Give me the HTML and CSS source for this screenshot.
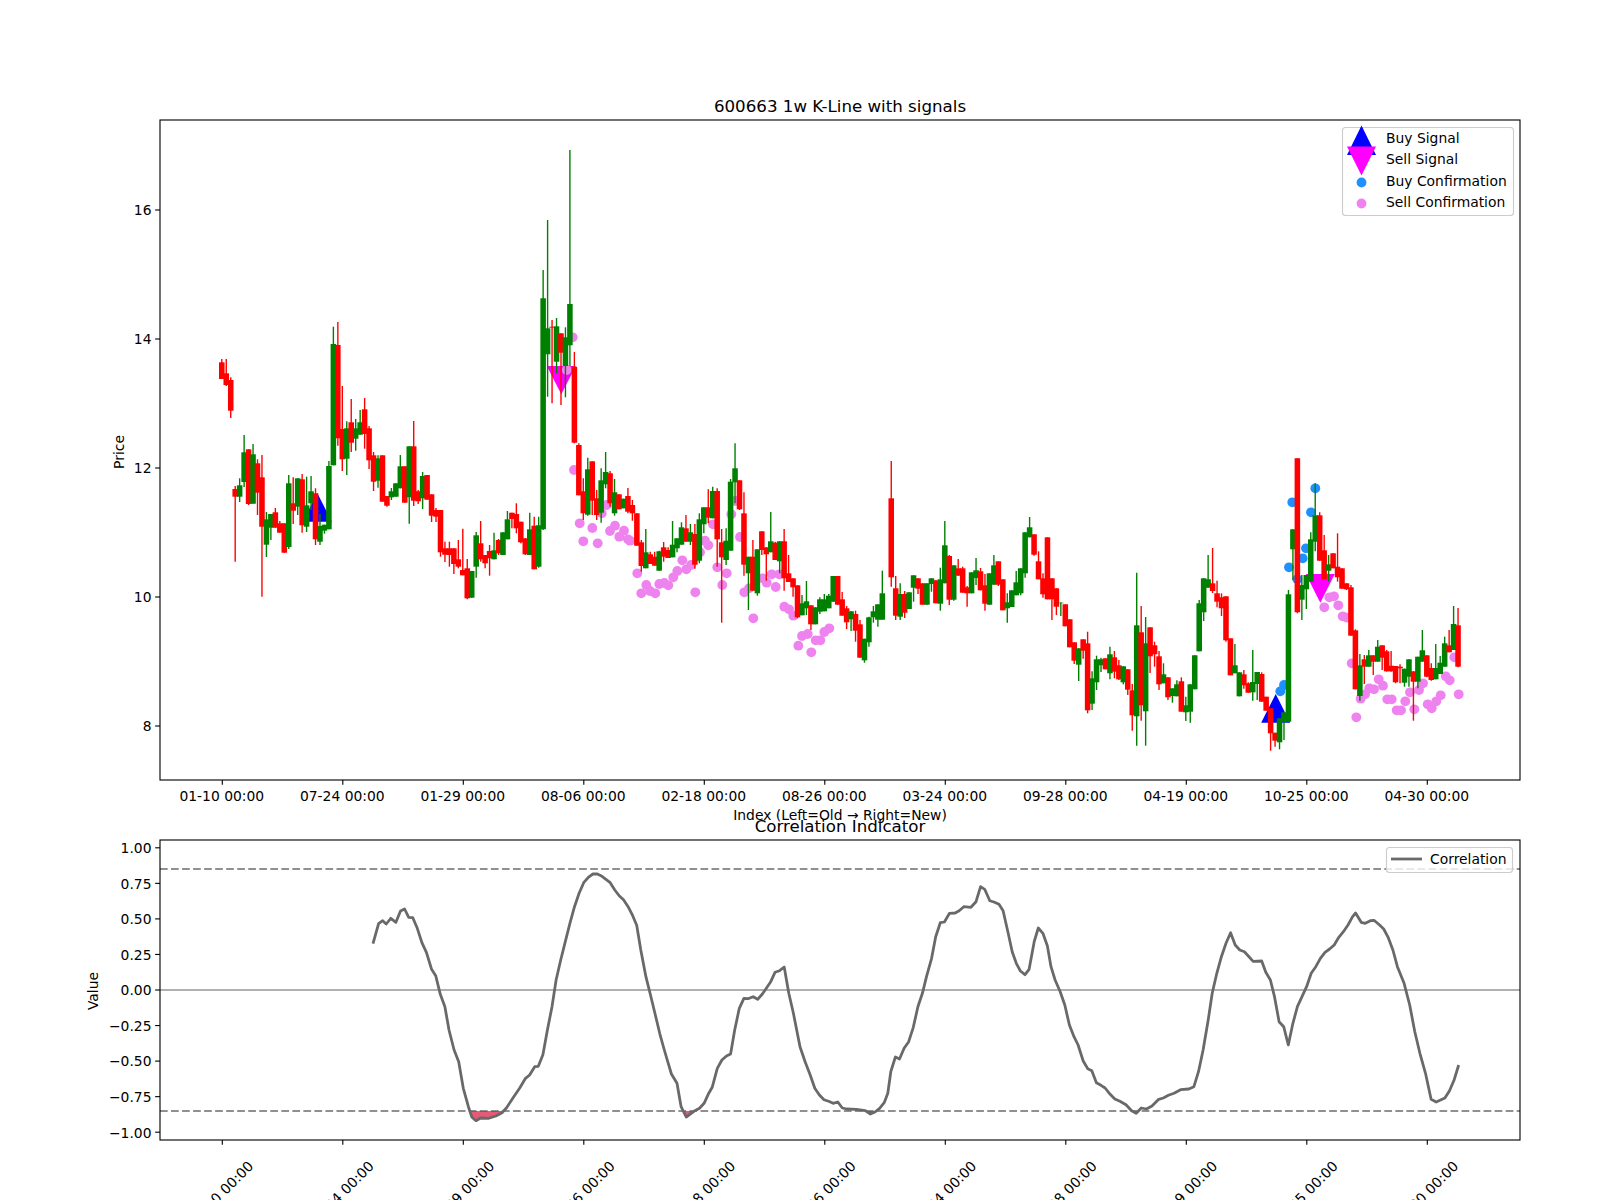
FILE: index.html
```html
<!DOCTYPE html>
<html lang="en">
<head>
    <meta charset="UTF-8">
    <title>600663 1w K-Line with signals</title>
    <link rel="stylesheet" href="styles.css">
</head>
<body>
    <div class="figure">
        <svg class="chart" width="1600" height="1200" viewBox="0 0 1600 1200">
            <defs>
                <clipPath id="below-band"><rect x="160" y="1111" width="1360" height="29"></rect></clipPath>
            </defs>

            <text class="chart-title" x="840" y="112">600663 1w K-Line with signals</text>
            <g id="price-markers"></g>
            <g id="candles"></g>
            <rect class="spine" x="160" y="120" width="1360" height="660"></rect>
            <g id="price-ticks"></g>
            <text class="axis-title" x="840" y="820">Index (Left=Old → Right=New)</text>
            <text class="axis-title" transform="translate(124 452) rotate(-90)">Price</text>

            <rect class="legend-box" x="1342.5" y="127.5" width="171" height="88" rx="3"></rect>
            <polygon class="buy-signal" points="1361.5,125.5 1347,155 1376,155"></polygon>
            <polygon class="sell-signal" points="1361.5,175.5 1347,146.5 1376,146.5"></polygon>
            <circle class="buy-dot" cx="1361.5" cy="182.5" r="4.9"></circle>
            <circle class="sell-dot" cx="1361.5" cy="203.5" r="4.9"></circle>
            <text class="legend-text" x="1386" y="143">Buy Signal</text>
            <text class="legend-text" x="1386" y="164">Sell Signal</text>
            <text class="legend-text" x="1386" y="185.5">Buy Confirmation</text>
            <text class="legend-text" x="1386" y="206.5">Sell Confirmation</text>

            <text class="chart-title" x="840" y="832">Correlation Indicator</text>
            <line class="zero-line" x1="160" y1="990" x2="1520" y2="990"></line>
            <line class="band-line" x1="160" y1="869" x2="1520" y2="869"></line>
            <line class="band-line" x1="160" y1="1111" x2="1520" y2="1111"></line>
            <polygon id="corr-fill" class="corr-fill" clip-path="url(#below-band)"></polygon>
            <polyline id="corr-line" class="corr-line"></polyline>
            <rect class="spine" x="160" y="840" width="1360" height="300"></rect>
            <g id="corr-ticks"></g>
            <text class="axis-title" transform="translate(98 991) rotate(-90)">Value</text>

            <rect class="legend-box" x="1386.5" y="847.5" width="126" height="25" rx="3"></rect>
            <line class="corr-line" x1="1391" y1="859" x2="1422" y2="859"></line>
            <text class="legend-text" x="1430" y="863.5">Correlation</text>
        </svg>
    </div>

    <script src="chart.js"></script>
</body>
</html>
```

FILE: styles.css
```css
body{
    margin: 0;
    background-color: #fff;
}
.figure{
    width: 1600px;
    height: 1200px;
    overflow: hidden;
}
.chart{
    display: block;
    font-family: "DejaVu Sans", sans-serif;
}
.chart-title{
    font-size: 16.67px;
    text-anchor: middle;
}
.axis-title{
    font-size: 13.89px;
    text-anchor: middle;
}
.tick-label{
    font-size: 13.89px;
}
.tick-x{
    text-anchor: middle;
}
.tick-y{
    text-anchor: end;
}
.legend-text{
    font-size: 13.89px;
}
.spine{
    fill: none;
    stroke: #000;
    stroke-width: 1.11;
}
.tick{
    stroke: #000;
    stroke-width: 1.11;
}
.legend-box{
    fill: rgba(255, 255, 255, 0.8);
    stroke: #ccc;
    stroke-width: 1.11;
}
.buy-signal{
    fill: #00f;
}
.sell-signal{
    fill: #f0f;
}
.buy-dot{
    fill: #1e90ff;
}
.sell-dot{
    fill: #ee82ee;
}
.wick{
    stroke-width: 1.39;
}
.body{
    stroke-width: 5.55;
}
.up{
    stroke: #008000;
}
.down{
    stroke: #f00;
}
.zero-line{
    stroke: #b0b0b0;
    stroke-width: 2;
}
.band-line{
    stroke: #909090;
    stroke-width: 2.08;
    stroke-dasharray: 7.7 3.33;
}
.corr-line{
    fill: none;
    stroke: #696969;
    stroke-width: 2.78;
    stroke-linejoin: round;
}
.corr-fill{
    fill: #dc143c;
    fill-opacity: 0.7;
}
```

FILE: chart.js
```js
// traced rows: colour, body top, body bottom, wick top, wick bottom (3x px from section top)
let sections = [
    {top: 320, rows: [
        ['r',127,177,117,177],['r',160,195,117,198],['r',180,272,172,294],['r',507,530,498,725],['g',496,530,475,546],
        ['g',397,486,345,501],['r',388,552,388,555],['g',403,551,372,551],['r',430,518,418,585],['r',472,620,405,830],
        ['g',598,674,576,711],['g',582,623,582,660],['r',577,623,564,623],['r',610,638,603,638],['r',610,698,610,698],
        ['g',490,681,465,687],['r',550,572,472,612],['g',475,560,475,585],['r',478,616,462,638],['g',556,620,470,636],
        ['g',514,550,468,570],['r',520,658,505,675],['g',618,665,582,675],['g',614,632,614,641],['g',438,628,423,628],
        ['g',72,436,20,436],['r',75,355,6,377],['r',327,418,198,453],['g',325,416,304,465],['r',307,368,237,396],
        ['g',325,356,297,392],['g',307,344,270,344],['r',268,342,234,386],['r',325,421,318,447],['r',406,485,396,513],
        ['g',415,482,406,503],['r',406,545,406,545],['r',528,557,528,560],['g',514,532,504,540],['g',490,530,490,530],
        ['g',439,505,405,505],['r',439,548,439,548],['g',379,532,379,611],['r',379,542,303,558],['r',514,544,510,552],
        ['g',468,535,456,567]
    ]},
    {top: 140, rows: [
        ['r',1005,1079,1005,1079],['r',1063,1127,1063,1146],['r',1110,1130,1104,1146],['r',1110,1237,1110,1250],['r',1225,1244,1205,1266],
        ['r',1225,1245,1205,1280],['r',1225,1272,1225,1302],['r',1258,1280,1200,1285],['r',1290,1306,1166,1306],['r',1285,1375,1257,1378],
        ['g',1293,1373,1293,1373],['g',1186,1280,1176,1313],['r',1210,1258,1143,1265],['r',1245,1270,1245,1285],['r',1233,1255,1215,1307],
        ['g',1231,1258,1178,1258],['r',1200,1240,1197,1245],['g',1177,1245,1177,1245],['g',1138,1198,1113,1198],['r',1118,1137,1118,1165],
        ['r',1122,1165,1090,1180],['r',1145,1207,1145,1210],['r',1195,1243,1195,1245],['g',1168,1245,1118,1245],['r',1157,1288,1130,1288],
        ['g',1156,1280,1130,1283],['g',475,1168,390,1170],['g',565,643,240,770],['r',560,563,540,790],['g',559,665,534,700],
        ['r',580,638,580,795],['g',592,678,562,772],['g',492,616,30,678],['r',680,908,636,910],['r',915,1066,910,1066],
        ['r',1054,1120,1015,1140],['g',988,1124,953,1127],['r',964,1082,964,1125],['r',1075,1125,1050,1140],['g',1021,1118,985,1148],
        ['g',996,1033,936,1045],['r',1000,1090,993,1100],['g',1057,1120,1017,1127],['r',1063,1108,1063,1108],['g',1076,1105,1076,1105],
        ['r',1068,1115,1044,1120]
    ]},
    {top: 430, rows: [
        ['r',225,250,210,272],['r',250,347,250,347],['r',337,408,330,425],['g',367,415,297,415],['r',373,402,365,402],
        ['r',380,407,365,407],['g',364,422,362,422],['r',352,380,336,395],['r',360,384,352,384],['g',344,382,273,382],
        ['g',325,355,325,367],['g',292,344,277,344],['r',295,335,255,335],['g',307,335,282,345],['r',312,404,282,416],
        ['g',268,392,250,400],['g',232,283,232,310],['r',232,263,178,280],['g',183,265,170,265],['r',183,328,175,410],
        ['r',337,382,297,578],['g',332,390,295,405],['g',155,362,147,362],['g',115,157,40,220],['r',151,238,151,240],
        ['r',250,404,187,437],['g',380,430,380,540],['r',380,482,330,482],['g',358,490,358,497],['r',304,360,304,375],
        ['r',352,373,352,452],['g',334,367,246,367],['r',338,390,335,390],['g',334,394,334,430],['r',334,445,297,482],
        ['r',430,456,375,456],['r',445,472,445,500],['r',466,562,466,565],['g',520,556,495,556],['g',514,535,453,555],
        ['r',526,583,526,600],['g',532,583,532,583],['g',508,545,502,552],['g',508,544,492,544],['g',497,535,492,535],
        ['g',438,515,438,515]
    ]},
    {top: 450, rows: [
        ['r',378,464,378,464],['r',448,497,426,497],['r',475,517,468,537],['g',484,508,484,543],['r',492,542,482,575],
        ['r',523,623,510,623],['g',566,631,566,638],['g',502,577,500,590],['g',484,502,468,518],['g',463,509,463,530],
        ['g',430,509,362,509],null,['r',145,382,33,410],['r',415,497,378,510],['g',432,500,400,510],
        ['r',432,488,423,504],['g',427,477,427,477],['g',376,413,376,455],['r',385,416,385,432],['r',400,464,400,464],
        ['g',400,464,400,464],['g',385,402,385,425],['r',391,460,391,460],['g',388,461,353,482],['g',286,400,213,400],
        ['r',318,449,315,465],['g',346,449,346,452],['r',355,377,327,377],['r',355,428,350,428],['r',412,430,408,470],
        ['g',367,430,367,430],['g',361,384,324,405],['r',364,421,354,421],['r',406,461,372,482],['g',370,464,370,464],
        ['g',346,404,315,404],['r',334,404,334,408],['r',388,481,388,481],['g',457,475,430,518],['g',421,471,421,471],
        ['g',397,436,363,436],['g',355,430,355,436],['g',247,370,247,383],['g',232,262,201,262],['r',253,314,253,317],
        ['r',334,388,304,388]
    ]},
    {top: 510, rows: [
        ['r',205,253,190,263],['r',82,268,82,268],['r',205,268,205,330],['r',235,290,235,315],['g',278,280,277,318],
        ['r',283,349,283,349],['r',328,412,328,412],['r',397,452,397,462],['g',415,464,415,513],['r',388,422,388,446],
        ['r',400,601,365,610],['g',505,581,484,600],['g',448,517,437,540],['g',448,466,443,486],['r',445,478,445,478],
        ['g',433,490,410,508],['r',442,485,423,505],['r',466,508,450,510],['g',469,517,469,523],['r',478,539,478,555],
        ['r',541,616,522,662],['g',346,619,188,707],['r',367,586,288,632],['g',400,604,321,707],['r',352,439,352,489],
        ['r',406,433,395,470],['r',439,523,423,540],['g',493,520,460,520],['r',502,562,502,570],['g',535,558,535,578],
        ['g',523,559,511,559],['r',514,605,502,605],['g',586,607,560,633],['g',523,605,523,638],['g',436,538,436,538],
        ['g',280,424,270,424],['g',205,307,205,333],['g',208,233,135,233],['r',220,243,114,249],['r',250,275,212,292],
        ['r',262,295,250,318],['r',259,391,259,395],['r',385,496,385,496],['g',466,490,402,490],['g',487,559,487,559],
        ['r',493,526,480,536]
    ]},
    {top: 450, rows: [
        ['r',700,728,697,728],['g',696,727,600,752],['g',666,702,666,750],['r',672,755,667,755],['r',740,782,740,782],
        ['r',775,850,775,902],['r',848,872,848,890],['g',805,877,805,898],['g',787,816,787,870],['g',433,815,420,815],
        ['g',238,298,238,390],['r',25,487,25,490],['g',405,449,375,510],['g',375,418,375,477],['g',268,395,247,395],
        ['g',196,275,100,304],['r',196,332,187,332],['r',301,388,255,388],['g',343,362,315,395],['r',310,355,310,355],
        ['r',350,382,250,395],['r',355,416,355,416],['r',400,418,400,420],['r',412,557,405,557],['r',541,718,538,718],
        ['g',646,738,612,752],['r',628,650,615,702],['g',616,650,600,650],['r',616,635,616,675],['g',590,635,570,635],
        ['r',586,623,586,660],['r',604,664,600,665],['r',647,664,603,665],['r',648,697,648,700],['r',650,655,643,700],
        ['g',656,698,656,710],['g',628,680,628,710],['r',664,695,664,812],['g',620,695,620,715],['g',601,635,540,635],
        ['r',616,680,616,682],['r',654,690,640,692],['g',654,688,582,688],['g',638,672,618,672],['g',580,650,560,650],
        ['r',586,607,540,607],['g',522,600,468,600],['r',526,650,474,652]
    ]}
];

let sellDots = [
    [572.7,337.3],[566.7,370],[574,470],[579.7,523.3],[592.3,528],[583.3,541.3],[597.7,543.3],[601.7,513.3],[606.7,505],
    [615,525.7],[610,531],[624,530.7],[619.3,536.7],[628,539.3],[630,540.7],[637.3,573.3],[646.3,585],[641.3,593.3],
    [650,591],[655.3,593.3],[659.3,584],[664.3,583],[668.3,585.3],[673.3,577.3],[677.3,571],[682.3,560.3],[686.3,569.3],
    [691,565],[700,552.3],[695.3,592.3],[705,540.7],[708.3,545.3],[713,524.3],[717.3,567.3],[722.3,585],[726.7,573.3],
    [731.3,514.3],[735.3,501],[740,537],[744.3,592.3],[749,588.3],[753.3,618.3],[762.7,578.3],[766.7,582.7],[771.7,574.3],
    [775.7,587],[779.3,574.3],[784.3,606.7],[789,609.3],[793.3,615.7],[798.3,645.7],[802,636],[807.7,634],[811.3,652.3],
    [815.7,640.3],[820.3,640.3],[824.3,632],[829.3,628.3],
    [1324.3,607.3],[1329.3,597.3],[1334,596.3],[1338.3,605.3],[1342.7,616.3],[1347.3,617.7],[1351.7,663.3],[1356.3,717.3],
    [1360.7,698.7],[1365,694.3],[1369.3,688.3],[1374,689.3],[1378.7,679.3],[1383,685.7],[1387.3,699.3],[1391.7,699.3],
    [1396.7,710.3],[1401,710.3],[1405.3,701.3],[1410,692.3],[1414.3,709.3],[1419,690],[1423,683.3],[1427.7,704.3],
    [1431.7,708.3],[1436.3,701.3],[1440.7,695.3],[1445.7,676.3],[1449.7,680.3],[1454.3,657.3],[1458.7,694.3]
];

let buyDots = [
    [1284,685],[1280.3,691.3],[1289,567.3],[1292.3,502.3],[1297.3,579.3],[1302.7,558.3],[1306,548.3],[1311,512.3],[1315.3,488.3]
];

// correlation trace, stretched 1.96x across and 3x down from (0,760) and (800,760)
let corrLeft = [
    731,551,742,491,750,482,757,492,766,475,776,487,785,453,793,447,801,472,809,473,818,505,827,548,836,578,846,628,854,647,
    863,703,872,740,880,810,890,870,899,905,908,985,918,1040,925,1072,933,1082,942,1074,958,1075,972,1068,984,1058,993,1043,
    1005,1015,1019,983,1030,955,1038,945,1048,920,1055,919,1064,884,1073,810,1082,740,1090,660,1099,600,1108,545,1117,490,
    1126,440,1135,400,1144,368,1153,352,1162,342,1171,342,1180,349,1196,368,1205,390,1214,408,1222,419,1231,440,1240,467,
    1248,496,1256,570,1266,650,1275,705,1284,762,1293,820,1302,870,1316,942,1327,970,1335,1040,1345,1071,1362,1052,1371,1045,
    1380,1030,1388,1003,1396,982,1406,925,1415,900,1424,888,1432,882,1440,810,1449,745,1458,715,1466,716,1476,710,1485,718,
    1494,703,1502,685,1510,667,1519,637,1528,632,1537,621,1546,700,1555,760,1568,860
];
let corrRight = [
    10,905,20,945,29,985,38,1005,47,1019,56,1024,65,1030,74,1026,83,1044,92,1047,110,1048,128,1052,138,1062,147,1056,156,1045,
    165,1028,172,1000,178,935,187,891,195,897,204,865,213,845,222,802,231,740,240,700,248,650,258,595,266,530,275,488,283,486,
    293,460,304,459,312,452,321,440,335,442,345,425,354,380,362,388,372,422,380,426,390,433,398,452,408,520,416,575,424,610,
    432,633,441,644,449,628,459,545,467,504,476,520,485,558,492,620,500,660,510,695,519,735,528,795,537,830,545,855,555,903,
    564,926,572,932,581,968,590,976,598,984,608,1003,617,1017,627,1024,639,1034,650,1052,659,1060,669,1044,679,1047,690,1038,
    703,1018,712,1014,722,1006,733,1000,746,989,762,987,772,980,781,935,790,870,800,780,808,700,817,640,826,590,835,550,
    844,518,853,555,862,570,871,575,880,590,888,604,905,603,913,637,922,660,930,710,939,785,948,800,957,855,966,790,975,740,
    984,710,993,680,1002,640,1011,620,1020,595,1029,577,1038,567,1047,555,1056,532,1065,515,1074,495,1083,470,1089,459,
    1100,487,1108,490,1118,482,1125,481,1136,495,1144,507,1153,533,1162,570,1171,620,1184,670,1195,735,1205,815,1215,880,
    1226,940,1237,1018,1247,1026,1264,1014,1273,992,1282,960,1291,915
];

let tickLabels = ['01-10 00:00','07-24 00:00','01-29 00:00','08-06 00:00','02-18 00:00','08-26 00:00','03-24 00:00','09-28 00:00','04-19 00:00','10-25 00:00','04-30 00:00'];
let priceLabels = ['16','14','12','10','8'];
let corrLabels = ['1.00','0.75','0.50','0.25','0.00','−0.25','−0.50','−0.75','−1.00'];

function tickX(i){
    return 222.3 + i * 120.5;
}

function xTicks(axisBottom, rotated){
    let html = '';
    tickLabels.forEach(function(label, i){
        let x = tickX(i);
        html += '<line class="tick" x1="' + x + '" y1="' + axisBottom + '" x2="' + x + '" y2="' + (axisBottom + 4.86) + '"></line>';
        if(rotated){
            html += '<text class="tick-label tick-x" transform="translate(' + (x + 2) + ' ' + (axisBottom + 57) + ') rotate(-45)">' + label + '</text>';
        }else{
            html += '<text class="tick-label tick-x" x="' + (x - 0.5) + '" y="' + (axisBottom + 21) + '">' + label + '</text>';
        }
    });
    return html;
}

function yTicks(labels, first, step){
    let html = '';
    labels.forEach(function(label, i){
        let y = first + i * step;
        html += '<line class="tick" x1="155.14" y1="' + y + '" x2="160" y2="' + y + '"></line>';
        html += '<text class="tick-label tick-y" x="151.5" y="' + (y + 5.3) + '">' + label + '</text>';
    });
    return html;
}

function triangle(cls, x, tip, base){
    return '<polygon class="' + cls + '" points="' + x + ',' + tip + ' ' + (x - 14.5) + ',' + base + ' ' + (x + 14.5) + ',' + base + '"></polygon>';
}

function dots(cls, list){
    return list.map(function(d){
        return '<circle class="' + cls + '" cx="' + d[0] + '" cy="' + d[1] + '" r="4.9"></circle>';
    }).join('');
}

function drawCandles(){
    let html = '';
    let i = 0;
    sections.forEach(function(section){
        section.rows.forEach(function(row){
            if(row){
                let x = (221.8 + i * 4.463).toFixed(2);
                let cls = row[0] == 'r' ? 'down' : 'up';
                let y = row.slice(1).map(function(v){ return (section.top + v / 3).toFixed(1); });
                html += '<line class="wick ' + cls + '" x1="' + x + '" x2="' + x + '" y1="' + y[2] + '" y2="' + y[3] + '"></line>';
                html += '<line class="body ' + cls + '" x1="' + x + '" x2="' + x + '" y1="' + y[0] + '" y2="' + y[1] + '"></line>';
            }
            i++;
        });
    });
    document.getElementById('candles').innerHTML = html;
}

function corrPoints(){
    let points = [];
    for(let i = 0; i < corrLeft.length; i += 2){
        points.push((corrLeft[i] / 1.96).toFixed(1) + ',' + (760 + corrLeft[i + 1] / 3).toFixed(1));
    }
    for(let i = 0; i < corrRight.length; i += 2){
        points.push((800 + corrRight[i] / 1.96).toFixed(1) + ',' + (760 + corrRight[i + 1] / 3).toFixed(1));
    }
    return points.join(' ');
}

document.getElementById('price-markers').innerHTML =
    triangle('buy-signal', 317.3, 493, 521.7) + triangle('buy-signal', 1275.7, 694, 722.7) +
    triangle('sell-signal', 561.3, 394.3, 366) + triangle('sell-signal', 1320.3, 602.7, 574) +
    dots('buy-dot', buyDots) + dots('sell-dot', sellDots);

drawCandles();

document.getElementById('price-ticks').innerHTML = xTicks(780, false) + yTicks(priceLabels, 210, 129);
document.getElementById('corr-ticks').innerHTML = xTicks(1140, true) + yTicks(corrLabels, 847.8, 35.55);

let points = corrPoints();
document.getElementById('corr-line').setAttribute('points', points);
document.getElementById('corr-fill').setAttribute('points', points);
```
